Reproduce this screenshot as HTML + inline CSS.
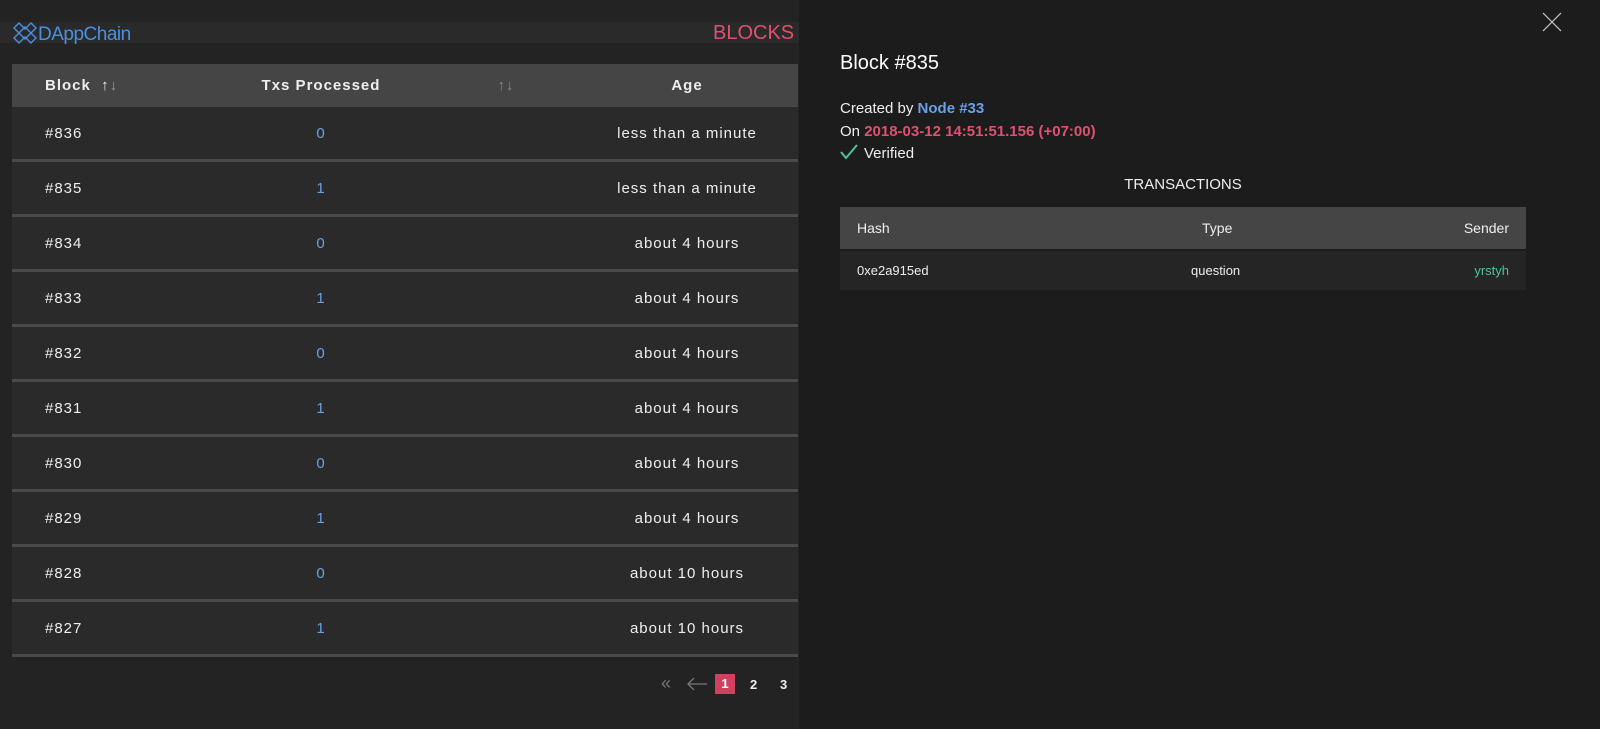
<!DOCTYPE html>
<html><head><style>
body{margin:0;width:1600px;height:729px;background:#232323;font-family:"Liberation Sans",sans-serif;overflow:hidden;position:relative;color:#eee}
.hdr{position:absolute;left:0;top:22px;width:800px;height:21px;background:#2a2a2a}
.logo{position:absolute;left:12px;top:22px;color:#4a90e2;font-size:19px;letter-spacing:-0.5px}
.blocks{position:absolute;left:713px;top:22px;color:#e0506f;font-size:20px}
table{position:absolute;left:12px;top:64px;width:786px;border-collapse:collapse;font-size:15px;letter-spacing:1px;table-layout:fixed}
th{background:#454545;height:43px;padding:0;font-weight:bold;color:#eee;text-align:center}
td{height:52px;padding:0;background:#2a2a2a;border-bottom:3px solid #4a4a4a;text-align:center}
td.n{color:#6aa0e6}
.l{text-align:left;padding-left:33px}
.panel{position:absolute;left:799px;top:0;width:801px;height:729px;background:#1c1c1c}
.pag{position:absolute;top:677px;font-size:13px;font-weight:bold}
</style></head><body>
<div class="hdr"></div>
<div class="logo"><svg width="26" height="22" viewBox="0 0 26 22" style="vertical-align:-4px"><g fill="none" stroke="#4a90e2" stroke-width="1.4"><path d="M2 6l5-5 6 6 6-6 5 5-5 5 5 5-5 5-6-6-6 6-5-5 5-5z"/><path d="M7 11l6-6 6 6-6 6z"/></g></svg>DAppChain</div>
<div class="blocks">BLOCKS</div>
<table>
<colgroup><col style="width:194px"><col style="width:230px"><col style="width:140px"><col style="width:222px"></colgroup>
<tr><th class="l">Block &nbsp;↑<span style="color:#999">↓</span></th><th>Txs Processed</th><th style="color:#888">↑↓</th><th>Age</th></tr>
<tr><td class="l">#836</td><td class="n">0</td><td></td><td>less than a minute</td></tr>
<tr><td class="l">#835</td><td class="n">1</td><td></td><td>less than a minute</td></tr>
<tr><td class="l">#834</td><td class="n">0</td><td></td><td>about 4 hours</td></tr>
<tr><td class="l">#833</td><td class="n">1</td><td></td><td>about 4 hours</td></tr>
<tr><td class="l">#832</td><td class="n">0</td><td></td><td>about 4 hours</td></tr>
<tr><td class="l">#831</td><td class="n">1</td><td></td><td>about 4 hours</td></tr>
<tr><td class="l">#830</td><td class="n">0</td><td></td><td>about 4 hours</td></tr>
<tr><td class="l">#829</td><td class="n">1</td><td></td><td>about 4 hours</td></tr>
<tr><td class="l">#828</td><td class="n">0</td><td></td><td>about 10 hours</td></tr>
<tr><td class="l">#827</td><td class="n">1</td><td></td><td>about 10 hours</td></tr>
</table>
<div class="pag" style="left:661px;color:#777;font-weight:normal;font-size:18px;top:673px">«</div>
<svg style="position:absolute;left:686px;top:677px" width="22" height="14"><path d="M21 7H2M8 1L2 7l6 6" fill="none" stroke="#777" stroke-width="1.3"/></svg>
<div style="position:absolute;left:715px;top:674px;width:20px;height:20px;background:#d0405f;color:#fff;font-size:13px;font-weight:bold;text-align:center;line-height:20px">1</div>
<div class="pag" style="left:750px">2</div>
<div class="pag" style="left:780px">3</div>
<div class="panel">
<div style="position:absolute;left:41px;top:52px;font-size:20px;color:#fff">Block #835</div>
<div style="position:absolute;left:41px;top:98px;font-size:15px;line-height:22.5px">Created by <b style="color:#6aa0e6">Node #33</b><br>On <b style="color:#e0506f">2018-03-12 14:51:51.156 (+07:00)</b><br><svg width="18" height="16" style="vertical-align:-2px;margin-right:6px"><path d="M1 8l5 6L17 1" fill="none" stroke="#4fc19b" stroke-width="2"/></svg>Verified</div>
<div style="position:absolute;left:0;width:768px;top:176px;text-align:center;font-size:15px">TRANSACTIONS</div>
<div style="position:absolute;left:41px;top:207px;width:686px;height:42px;background:#454545;font-size:14px">
<span style="position:absolute;left:17px;top:13px">Hash</span><span style="position:absolute;left:362px;top:13px">Type</span><span style="position:absolute;right:17px;top:13px">Sender</span></div>
<div style="position:absolute;left:41px;top:251px;width:686px;height:39px;background:#252525;font-size:13px">
<span style="position:absolute;left:17px;top:12px">0xe2a915ed</span><span style="position:absolute;left:351px;top:12px">question</span><span style="position:absolute;right:17px;top:12px;color:#4fc19b">yrstyh</span></div>
<svg style="position:absolute;left:743px;top:12px" width="20" height="20"><path d="M1 1L19 19M19 1L1 19" stroke="#ccc" stroke-width="1.2"/></svg>
</div>
</body></html>
